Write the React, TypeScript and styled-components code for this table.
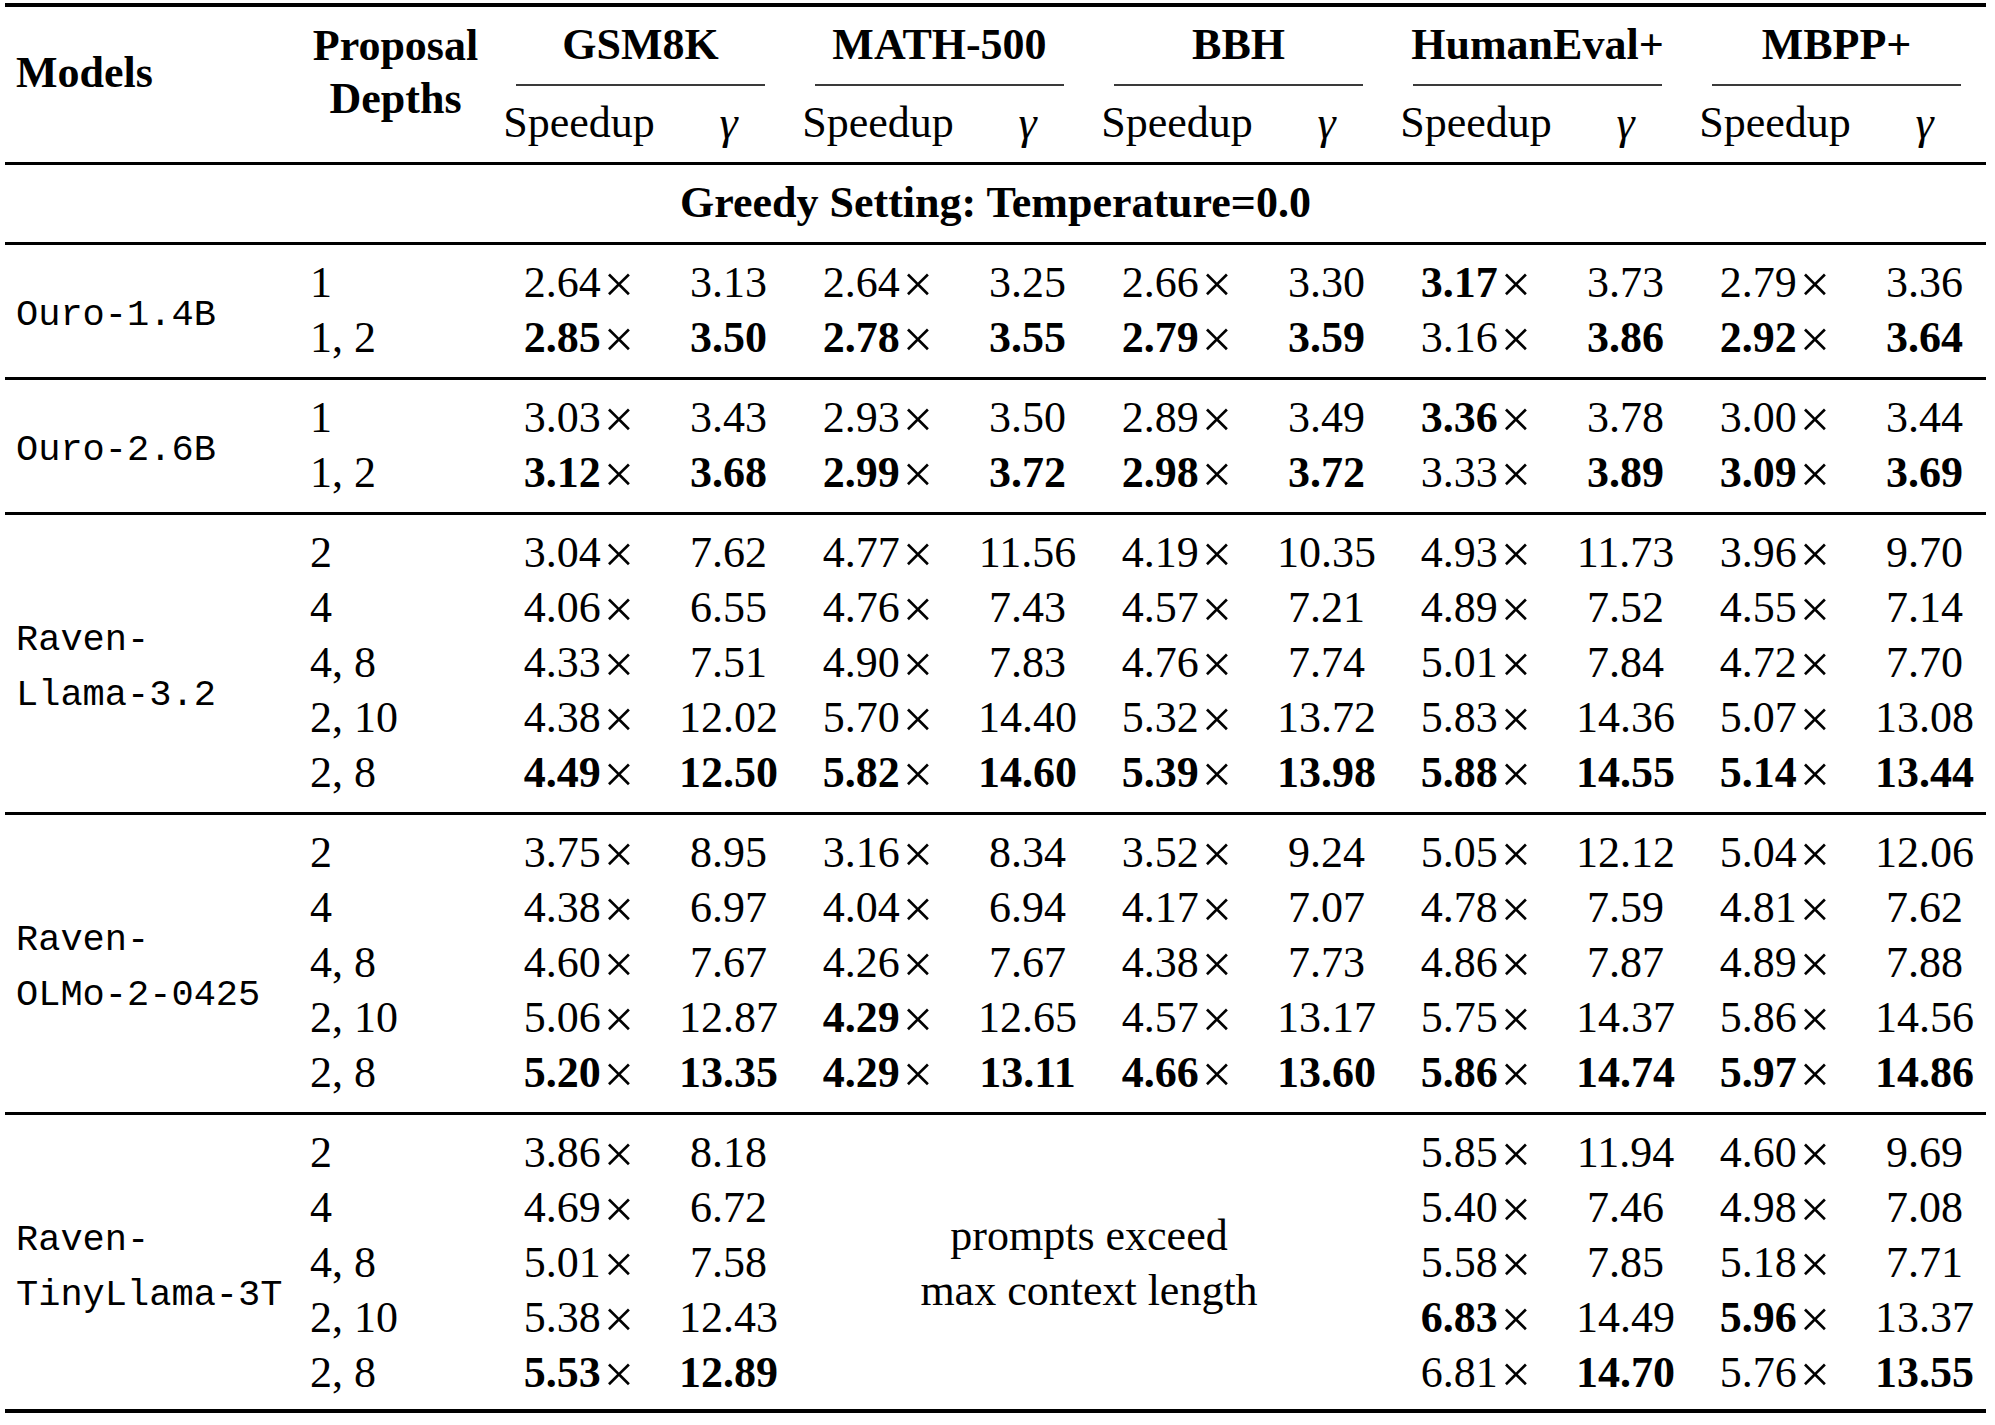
import * as React from 'react';
import styled, { createGlobalStyle } from 'styled-components';

const GlobalStyle = createGlobalStyle`
  html, body {
    margin: 0;
    padding: 0;
    background: #fff;
  }
  body {
    font-family: "Liberation Serif", "Times New Roman", serif;
    color: #000;
  }
`;

// Models | Depths | 5 x (Speedup, gamma)
const COLS = '295px 191px repeat(5, 176px 123px)';

const Table = styled.div`
  width: 1981px;
  margin: 3px 0 0 5px;
  border-top: 4px solid #000;
  border-bottom: 4px solid #000;
  font-size: 44px;
`;

const HeaderGrid = styled.div`
  display: grid;
  grid-template-columns: ${COLS};
  grid-template-rows: 55px 23px 55px;
  line-height: 55px;
  padding: 10px 0 12px;
  border-bottom: 3px solid #000;
`;

const ModelsHead = styled.div`
  grid-column: 1;
  grid-row: 1 / 4;
  align-self: start;
  margin-top: 28px;
  padding-left: 11px;
  font-weight: bold;
`;

const DepthsHead = styled.div`
  grid-column: 2;
  grid-row: 1 / 4;
  align-self: start;
  margin-top: 2px;
  line-height: 53px;
  text-align: center;
  font-weight: bold;
`;

const GroupTitle = styled.div<{ $col: number }>`
  grid-row: 1;
  grid-column: ${p => p.$col} / span 2;
  text-align: center;
  font-weight: bold;
`;

const CMidRule = styled.div<{ $col: number }>`
  grid-row: 2;
  grid-column: ${p => p.$col} / span 2;
  align-self: start;
  margin: 12px 25px 0;
  height: 2px;
  background: #3a3a3a;
`;

const SubHead = styled.div<{ $col: number; $greek?: boolean }>`
  grid-row: 3;
  grid-column: ${p => p.$col};
  text-align: center;
  font-style: ${p => (p.$greek ? 'italic' : 'normal')};
  font-size: ${p => (p.$greek ? '46px' : '44px')};
`;

const Section = styled.div<{ $last?: boolean }>`
  display: grid;
  grid-template-columns: ${COLS};
  grid-auto-rows: 55px;
  line-height: 55px;
  padding: 10px 0 ${p => (p.$last ? 9 : 12)}px;
  border-bottom: ${p => (p.$last ? 'none' : '3px solid #000')};
`;

const SettingTitle = styled.div`
  grid-column: 1 / -1;
  text-align: center;
  font-weight: bold;
`;

const ModelLabel = styled.div<{ $rows: number }>`
  grid-column: 1;
  grid-row: span ${p => p.$rows};
  align-self: center;
  margin-top: 10px;
  padding-left: 11px;
  font-family: "Liberation Mono", "Courier New", monospace;
  font-size: 37px;
  line-height: 55px;
  white-space: pre;
`;

const DepthCell = styled.div`
  padding-left: 10px;
  white-space: nowrap;
`;

const Cell = styled.div`
  text-align: center;
  white-space: nowrap;
`;

const Num = styled.span<{ $bold?: boolean }>`
  font-weight: ${p => (p.$bold ? 'bold' : 'normal')};
`;

const Times = styled.span`
  font-size: 1.22em;
  line-height: 0;
  margin-left: 3px;
  vertical-align: -5px;
`;

const Note = styled.div<{ $rows: number }>`
  grid-column: 5 / 9;
  grid-row: 1 / span ${p => p.$rows};
  align-self: center;
  text-align: center;
  line-height: 55px;
`;

const benchmarks = ['GSM8K', 'MATH-500', 'BBH', 'HumanEval+', 'MBPP+'];

type Row = (string | null)[];

interface Group {
  label: string;
  rows: Row[];
  note?: string[];
}

// "*" marks a bold value; null marks a column covered by the note
const groups: Group[] = [
  {
    label: 'Ouro-1.4B',
    rows: [
      ['1', '2.64', '3.13', '2.64', '3.25', '2.66', '3.30', '*3.17', '3.73', '2.79', '3.36'],
      ['1, 2', '*2.85', '*3.50', '*2.78', '*3.55', '*2.79', '*3.59', '3.16', '*3.86', '*2.92', '*3.64'],
    ],
  },
  {
    label: 'Ouro-2.6B',
    rows: [
      ['1', '3.03', '3.43', '2.93', '3.50', '2.89', '3.49', '*3.36', '3.78', '3.00', '3.44'],
      ['1, 2', '*3.12', '*3.68', '*2.99', '*3.72', '*2.98', '*3.72', '3.33', '*3.89', '*3.09', '*3.69'],
    ],
  },
  {
    label: 'Raven-\nLlama-3.2',
    rows: [
      ['2', '3.04', '7.62', '4.77', '11.56', '4.19', '10.35', '4.93', '11.73', '3.96', '9.70'],
      ['4', '4.06', '6.55', '4.76', '7.43', '4.57', '7.21', '4.89', '7.52', '4.55', '7.14'],
      ['4, 8', '4.33', '7.51', '4.90', '7.83', '4.76', '7.74', '5.01', '7.84', '4.72', '7.70'],
      ['2, 10', '4.38', '12.02', '5.70', '14.40', '5.32', '13.72', '5.83', '14.36', '5.07', '13.08'],
      ['2, 8', '*4.49', '*12.50', '*5.82', '*14.60', '*5.39', '*13.98', '*5.88', '*14.55', '*5.14', '*13.44'],
    ],
  },
  {
    label: 'Raven-\nOLMo-2-0425',
    rows: [
      ['2', '3.75', '8.95', '3.16', '8.34', '3.52', '9.24', '5.05', '12.12', '5.04', '12.06'],
      ['4', '4.38', '6.97', '4.04', '6.94', '4.17', '7.07', '4.78', '7.59', '4.81', '7.62'],
      ['4, 8', '4.60', '7.67', '4.26', '7.67', '4.38', '7.73', '4.86', '7.87', '4.89', '7.88'],
      ['2, 10', '5.06', '12.87', '*4.29', '12.65', '4.57', '13.17', '5.75', '14.37', '5.86', '14.56'],
      ['2, 8', '*5.20', '*13.35', '*4.29', '*13.11', '*4.66', '*13.60', '*5.86', '*14.74', '*5.97', '*14.86'],
    ],
  },
  {
    label: 'Raven-\nTinyLlama-3T',
    note: ['prompts exceed', 'max context length'],
    rows: [
      ['2', '3.86', '8.18', null, null, null, null, '5.85', '11.94', '4.60', '9.69'],
      ['4', '4.69', '6.72', null, null, null, null, '5.40', '7.46', '4.98', '7.08'],
      ['4, 8', '5.01', '7.58', null, null, null, null, '5.58', '7.85', '5.18', '7.71'],
      ['2, 10', '5.38', '12.43', null, null, null, null, '*6.83', '14.49', '*5.96', '13.37'],
      ['2, 8', '*5.53', '*12.89', null, null, null, null, '6.81', '*14.70', '5.76', '*13.55'],
    ],
  },
];

const Value = ({ raw, speedup }: { raw: string; speedup: boolean }) => {
  const bold = raw.startsWith('*');
  const text = bold ? raw.slice(1) : raw;
  return (
    <Cell>
      <Num $bold={bold}>{text}</Num>
      {speedup && <Times>×</Times>}
    </Cell>
  );
};

const Header = () => (
  <HeaderGrid>
    <ModelsHead>Models</ModelsHead>
    <DepthsHead>
      Proposal
      <br />
      Depths
    </DepthsHead>
    {benchmarks.map((b, i) => (
      <React.Fragment key={b}>
        <GroupTitle $col={3 + i * 2}>{b}</GroupTitle>
        <CMidRule $col={3 + i * 2} />
        <SubHead $col={3 + i * 2}>Speedup</SubHead>
        <SubHead $col={4 + i * 2} $greek>γ</SubHead>
      </React.Fragment>
    ))}
  </HeaderGrid>
);

export default function App() {
  return (
    <>
      <GlobalStyle />
      <Table>
        <Header />
        <Section>
          <SettingTitle>Greedy Setting: Temperature=0.0</SettingTitle>
        </Section>
        {groups.map((g, gi) => (
          <Section key={g.label} $last={gi === groups.length - 1}>
            <ModelLabel $rows={g.rows.length}>{g.label}</ModelLabel>
            {g.note && (
              <Note $rows={g.rows.length}>
                {g.note[0]}
                <br />
                {g.note[1]}
              </Note>
            )}
            {g.rows.map((r, ri) => (
              <React.Fragment key={ri}>
                <DepthCell>{r[0]}</DepthCell>
                {r.slice(1).map((v, vi) =>
                  v === null ? null : <Value key={vi} raw={v} speedup={vi % 2 === 0} />
                )}
              </React.Fragment>
            ))}
          </Section>
        ))}
      </Table>
    </>
  );
}
